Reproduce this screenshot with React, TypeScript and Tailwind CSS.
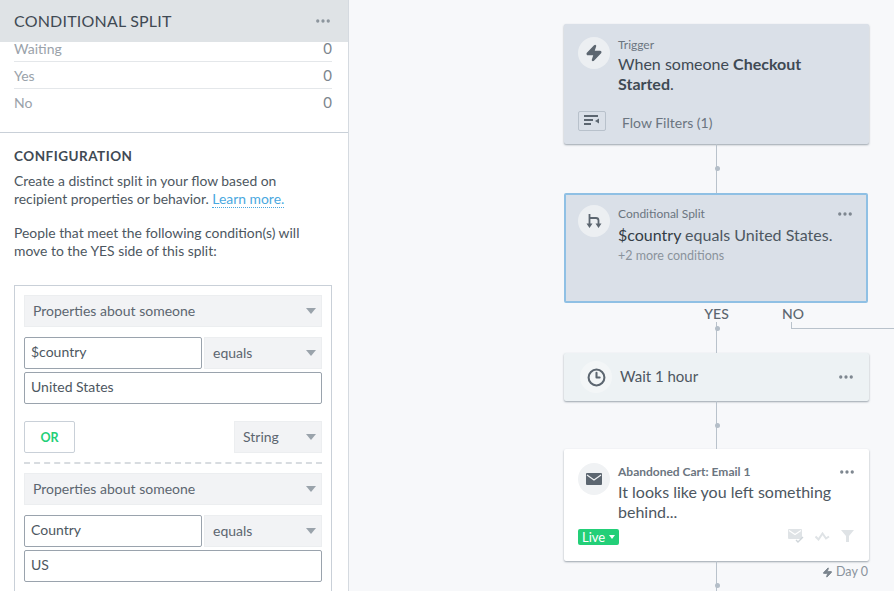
import type { ReactNode } from 'react';
import { Clock3, Ellipsis, Zap } from 'lucide-react';

const font = "font-['Lato','Open_Sans',sans-serif]";

function Caret({ className = 'border-x-[5px] border-t-[6px] border-t-[#9aa3ab]' }: { className?: string }) {
  return <span className={`h-0 w-0 border-x-transparent ${className}`} />;
}

function Select({ label, className = '' }: { label: string; className?: string }) {
  return (
    <div className={`flex h-[32px] items-center justify-between border border-[#eceef0] bg-[#f2f3f5] pb-[1px] pl-[8px] pr-[5px] text-[14px] text-[#5c6670] ${className}`}>
      <span>{label}</span>
      <Caret />
    </div>
  );
}

function Input({ value, className = '' }: { value: string; className?: string }) {
  return (
    <div className={`flex h-[32px] items-center rounded-[2px] border border-[#9aa3ad] bg-white pb-[3px] pl-[6px] text-[14px] text-[#4d5761] ${className}`}>
      {value}
    </div>
  );
}

function Condition({ prop, value }: { prop: string; value: string }) {
  return (
    <div className="flex flex-col">
      <Select label="Properties about someone" />
      <div className="mt-[10px] flex gap-[2px]">
        <Input value={prop} className="w-[178px]" />
        <Select label="equals" className="flex-1" />
      </div>
      <Input value={value} className="mt-[3px]" />
    </div>
  );
}

function Stat({ label, className = 'h-[27px] border-b border-[#e4e7ea]' }: { label: string; className?: string }) {
  return (
    <div className={`flex items-center justify-between text-[14px] text-[#9aa2aa] ${className}`}>
      <span>{label}</span>
      <span className="text-[15px] text-[#7d868e]">0</span>
    </div>
  );
}

function IconCircle({ children, className = 'bg-[#eceff2]' }: { children: ReactNode; className?: string }) {
  return <div className={`flex h-[32px] w-[32px] shrink-0 items-center justify-center rounded-full ${className}`}>{children}</div>;
}

function Line({ height, dot }: { height: number; dot?: number }) {
  return (
    <div className="relative mx-auto w-px bg-[#b9c2cb]" style={{ height }}>
      {dot !== undefined && <span className="absolute left-[-1px] h-[5px] w-[5px] rounded-full bg-[#b4bec8]" style={{ top: dot }} />}
    </div>
  );
}

function More({ className = 'text-[#7c858e]' }: { className?: string }) {
  return <Ellipsis className={`h-[18px] w-[18px] ${className}`} strokeWidth={2.4} />;
}

export default function App() {
  return (
    <div className={`flex h-[591px] w-[894px] overflow-hidden bg-[#f7f8fa] ${font}`}>
      <aside className="flex h-full w-[349px] shrink-0 flex-col overflow-hidden border-r border-[#d5dae0] bg-white">
        <header className="flex h-[42px] shrink-0 items-center justify-between bg-[#dfe3e6] pl-[14px] pr-[16px]">
          <h1 className="text-[16px] tracking-[0.2px] text-[#3f4a54]">CONDITIONAL SPLIT</h1>
          <More className="text-[#8b949c]" />
        </header>
        <div className="h-[91px] shrink-0 border-b border-[#c9d0d8] pl-[14px] pr-[16px]">
          <Stat label="Waiting" className="h-[20px] border-b border-[#e4e7ea] pb-[6px]" />
          <Stat label="Yes" />
          <Stat label="No" className="h-[27px]" />
        </div>
        <section className="px-[14px] pt-[14px]">
          <h2 className="text-[13.5px] font-bold leading-[18px] tracking-[0.5px] text-[#3f4a54]">CONFIGURATION</h2>
          <p className="mt-[7px] w-[295px] text-[13.9px] leading-[18px] text-[#4d5761]">
            Create a distinct split in your flow based on recipient properties or behavior.{' '}
            <a className="border-b border-dotted border-[#4aa8e0] text-[#4aa8e0]">Learn more.</a>
          </p>
          <p className="mt-[16px] w-[295px] text-[13.9px] leading-[18px] text-[#4d5761]">
            People that meet the following condition(s) will move to the YES side of this split:
          </p>
          <div className="mt-[25px] w-[318px] border border-[#c9d0d8] px-[9px] pb-[20px] pt-[9px]">
            <Condition prop="$country" value="United States" />
            <div className="mt-[17px] flex items-center justify-between">
              <button className="h-[32px] w-[51px] rounded-[2px] border border-[#c9d0d8] bg-white pt-[2px] text-[12.5px] font-bold text-[#23cf78]">OR</button>
              <Select label="String" className="w-[88px]" />
            </div>
            <div className="mb-[9px] mt-[9px] border-t-2 border-dashed border-[#d8dce0]" />
            <Condition prop="Country" value="US" />
          </div>
        </section>
      </aside>

      <main className="flex-1">
        <div className="ml-[215px] w-[305px] pt-[24px]">
          <div className="h-[120px] rounded-[2px] bg-[#dae0e8] shadow-[0_1px_2px_rgba(80,95,110,0.55)]">
            <div className="flex gap-[8px] pl-[14px] pt-[13px]">
              <IconCircle>
                <Zap className="h-[18px] w-[18px] fill-[#5c6670] text-[#5c6670]" />
              </IconCircle>
              <div>
                <div className="text-[12px] leading-[16px] text-[#6b7580]">Trigger</div>
                <div className="mt-[1px] w-[220px] text-[16px] leading-[20px] text-[#3f4a54]">
                  When someone <b>Checkout Started</b>.
                </div>
              </div>
            </div>
            <div className="mt-[14px] flex items-center pl-[14px]">
              <div className="flex h-[20px] w-[28px] items-center justify-center rounded-[2px] border border-[#b8c1cb]">
                <svg width="16" height="12" viewBox="0 0 16 12" fill="#5c6670">
                  <rect x="0" y="0" width="14" height="2" />
                  <rect x="0" y="4" width="9" height="2" />
                  <rect x="0" y="8" width="7" height="2" />
                  <path d="M15 3.500v5L11 6z" />
                </svg>
              </div>
              <span className="ml-[16px] pt-[4px] text-[14px] text-[#6b7580]">Flow Filters (1)</span>
            </div>
          </div>

          <Line height={49} dot={22} />

          <div className="h-[110px] w-[304px] rounded-[2px] border-2 border-[#8fc0e4] bg-[#dae0e8] pl-[12px] pr-[12px] pt-[10px]">
            <div className="flex gap-[8px]">
              <IconCircle>
                <svg width="16" height="16" viewBox="0 0 16 16" fill="none" stroke="#5c6670" strokeWidth="1.8">
                  <path d="M3.500 1v10M3.500 5h6.500a2.500 2.500 0 0 1 2.500 2.500V11" />
                  <path d="M0.500 10.500h6L3.500 15zM9.500 10.500h6L12.500 15z" fill="#5c6670" stroke="none" />
                </svg>
              </IconCircle>
              <div className="flex-1">
                <div className="flex items-center justify-between text-[12px] leading-[16px] text-[#6b7580]">
                  <span>Conditional Split</span>
                  <More />
                </div>
                <div className="mt-[2px] text-[16px] leading-[20px] text-[#4d5761]">
                  <span className="text-[#333c45]">$country</span> equals United States.
                </div>
                <div className="mt-[3px] text-[12.5px] leading-[16px] text-[#8a939c]">+2 more conditions</div>
              </div>
            </div>
          </div>

          <div className="relative">
            <div className="relative flex h-[19px] items-end justify-center text-[14px] font-medium leading-[17px] text-[#5c6670]">
              YES
              <span className="absolute left-[218px]">NO</span>
            </div>
            <div className="absolute left-[227px] top-[19px] h-[7px] w-[103px] border-b border-l border-[#b9c2cb]" />
            <Line height={31} dot={4} />
          </div>

          <div className="flex h-[48px] items-center rounded-[2px] bg-[#edf2f4] pl-[16px] pr-[14px] shadow-[0_1px_2px_rgba(80,95,110,0.55)]">
            <IconCircle className="bg-[#f3f6f7]">
              <Clock3 className="h-[19px] w-[19px] text-[#5c6670]" strokeWidth={2.6} />
            </IconCircle>
            <span className="ml-[8px] flex-1 pb-[2px] text-[15px] text-[#4d5761]">Wait 1 hour</span>
            <More />
          </div>

          <Line height={48} dot={22} />

          <div className="h-[112px] rounded-[2px] bg-white pl-[14px] pr-[13px] pt-[14px] shadow-[0_1px_2px_rgba(80,95,110,0.55)]">
            <div className="flex gap-[8px]">
              <IconCircle className="bg-[#f0f2f4]">
                <svg width="16" height="12" viewBox="0 0 16 12">
                  <rect width="16" height="12" rx="1" fill="#5c6670" />
                  <path d="M1 2l7 5 7-5" fill="none" stroke="#f0f2f4" strokeWidth="1.2" />
                </svg>
              </IconCircle>
              <div className="flex-1">
                <div className="flex items-center justify-between text-[12px] font-bold leading-[16px] text-[#6b7580]">
                  <span>Abandoned Cart: Email 1</span>
                  <More />
                </div>
                <div className="mt-[1px] text-[16px] leading-[20px] text-[#4d5761]">It looks like you left something behind...</div>
              </div>
            </div>
            <div className="mt-[7px] flex items-center justify-between">
              <span className="flex h-[16px] w-[41px] items-center gap-[4px] rounded-[2px] bg-[#23cf78] pl-[4px] text-[13px] leading-[16px] text-white">
                Live
                <Caret className="border-x-[3px] border-t-[4px] border-t-white" />
              </span>
              <div className="mb-[2px] flex items-center gap-[11px] pr-[2px]">
                <svg width="16" height="14" viewBox="0 0 16 14">
                  <rect width="14" height="10" rx="1" fill="#dfe3e6" />
                  <path d="M1 1.500l6 4 6-4" fill="none" stroke="#fff" strokeWidth="1.2" />
                  <path d="M8 11l2 2 5-5" fill="none" stroke="#cfd5da" strokeWidth="1.4" />
                </svg>
                <svg width="15" height="9" viewBox="0 0 15 9" fill="none" stroke="#dfe3e6" strokeWidth="2">
                  <path d="M0.500 4.500l3 3 4-6 3.500 5 3-2" />
                </svg>
                <svg width="13" height="12" viewBox="0 0 13 12" fill="#dfe3e6">
                  <path d="M0 0h13L8 6v6H5V6z" />
                </svg>
              </div>
            </div>
          </div>

          <div className="relative">
            <Line height={30} dot={22} />
            <div className="absolute right-[1px] top-[3px] flex items-center gap-[3px] text-[12.5px] leading-[16px] text-[#8a939c]">
              <Zap className="h-[11px] w-[11px] fill-[#7c858e] text-[#7c858e]" />
              Day 0
            </div>
          </div>
        </div>
      </main>
    </div>
  );
}
